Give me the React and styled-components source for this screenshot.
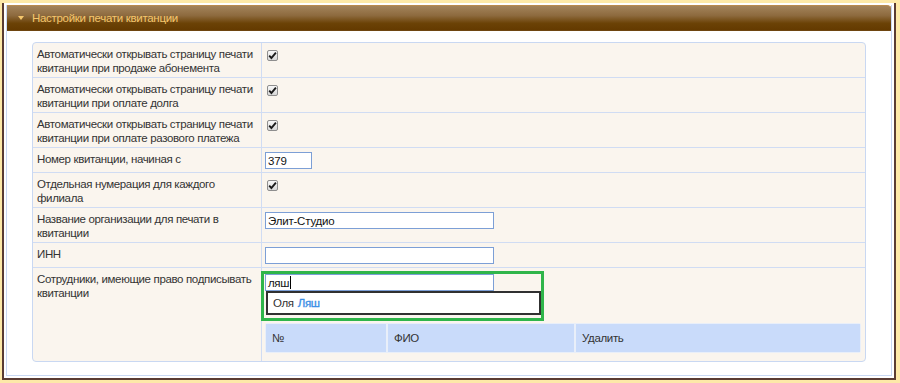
import * as React from "react";
import styled, { createGlobalStyle } from "styled-components";

const GlobalStyle = createGlobalStyle`
    body {
        margin: 0;
        background: #fde9a8;
        font-family: "Liberation Sans", Arial, sans-serif;
    }
`;

const rows = [
    { label: "Автоматически открывать страницу печати квитанции при продаже абонемента", kind: "check" },
    { label: "Автоматически открывать страницу печати квитанции при оплате долга", kind: "check" },
    { label: "Автоматически открывать страницу печати квитанции при оплате разового платежа", kind: "check" },
    { label: "Номер квитанции, начиная с", kind: "input", value: "379", short: true },
    { label: "Отдельная нумерация для каждого филиала", kind: "check" },
    { label: "Название организации для печати в квитанции", kind: "input", value: "Элит-Студио" },
    { label: "ИНН", kind: "input", value: "" },
];

function CheckMark() {
    return (
        <CheckBox>
            <svg width="9" height="9" viewBox="0 0 9 9">
                <path d="M1.2 4.6 L3.4 7 L7.9 1.6" fill="none" stroke="#1a1a1a" strokeWidth="1.9" />
            </svg>
        </CheckBox>
    );
}

function ReceiptSettings() {
    return (
        <Frame>
            <Panel>
                <Header>
                    <Arrow />
                    Настройки печати квитанции
                </Header>
                <Body>
                    <Table>
                        {rows.map((r, i) => (
                            <Row key={i}>
                                <LabelCell>{r.label}</LabelCell>
                                <ValueCell $tall={r.kind === "input"}>
                                    {r.kind === "check" ? (
                                        <CheckMark />
                                    ) : (
                                        <TextInput readOnly value={r.value} $short={r.short} />
                                    )}
                                </ValueCell>
                            </Row>
                        ))}
                        <Row $last>
                            <LabelCell>Сотрудники, имеющие право подписывать квитанции</LabelCell>
                            <ValueCell $compact>
                                <Highlight>
                                    <FakeInput>
                                        ляш
                                        <Caret />
                                    </FakeInput>
                                    <Suggest>
                                        Оля <Match>Ляш</Match>
                                    </Suggest>
                                </Highlight>
                                <SubTable>
                                    <HeadCell $w={120}>№</HeadCell>
                                    <HeadCell $w={186}>ФИО</HeadCell>
                                    <HeadCell $grow>Удалить</HeadCell>
                                </SubTable>
                            </ValueCell>
                        </Row>
                    </Table>
                </Body>
            </Panel>
        </Frame>
    );
}

const Frame = styled.div`
    box-sizing: border-box;
    width: 894px;
    height: 377px;
    margin: 3px 0 0 2px;
    border: 2px solid #5a3c33;
    border-top: none;
    padding: 2px 2px 2px 2px;
    background: #fff;
    display: flex;
`;
const Panel = styled.section`
    flex: 1;
    display: flex;
    flex-direction: column;
    border: 1px solid #c9d8f2;
    border-top: none;
    background: #fff;
    overflow: hidden;
`;
const Header = styled.div`
    flex: none;
    height: 26px;
    box-sizing: border-box;
    display: flex;
    align-items: center;
    padding-left: 11px;
    margin: 0 -1px;
    border: 1px solid #b98a4e;
    border-bottom-color: #6e4510;
    border-radius: 0 5px 0 0;
    background: linear-gradient(#a3835b 0%, #8d6a3e 40%, #6b4206 72%, #643a00 100%);
    color: #f5c66c;
    font-size: 11.5px;
    letter-spacing: -0.3px;
`;
const Arrow = styled.span`
    width: 0;
    height: 0;
    border-left: 3px solid transparent;
    border-right: 3px solid transparent;
    border-top: 4px solid #f5c66c;
    margin-right: 8px;
`;
const Body = styled.div`
    flex: 1;
    padding: 11px 25px 0 25px;
`;
const Table = styled.div`
    border: 1px solid #c9d8f2;
    border-radius: 4px;
    background: #faf5ee;
    color: #333;
    font-size: 11.5px;
    line-height: 14px;
    letter-spacing: -0.35px;
`;
const Row = styled.div`
    display: flex;
    border-top: 1px solid #d0dcf3;
    min-height: ${(p) => (p.$last ? "93px" : "auto")};
    &:first-child {
        border-top: none;
    }
`;
const LabelCell = styled.div`
    width: 224px;
    flex: none;
    padding: 4px 0 2px 4px;
    border-right: 1px solid #d0dcf3;
`;
const ValueCell = styled.div`
    flex: 1;
    padding: ${(p) => (p.$compact ? "3px 3px 0 3px" : p.$tall ? "4px 3px 3px 3px" : "7px 3px 3px 5px")};
`;
const CheckBox = styled.span`
    display: flex;
    align-items: center;
    justify-content: center;
    width: 11px;
    height: 11px;
    box-sizing: border-box;
    border: 1px solid #8e8e8e;
    border-radius: 2px;
    background: linear-gradient(#f8f8f8, #d8d8d8);
`;
const TextInput = styled.input`
    display: block;
    box-sizing: border-box;
    width: ${(p) => (p.$short ? "47px" : "229px")};
    height: 17px;
    margin: 0;
    padding: 0 2px;
    border: 1px solid #7c9fd6;
    background: #fff;
    color: #111;
    font-family: "Liberation Sans", Arial, sans-serif;
    font-size: 11.5px;
    letter-spacing: -0.2px;
    outline: none;
`;
const Highlight = styled.div`
    box-sizing: border-box;
    width: 283px;
    margin-left: -4px;
    border: 3px solid #2fb54a;
    padding: 0 0 3px 1px;
`;
const FakeInput = styled.div`
    box-sizing: border-box;
    width: 229px;
    height: 17px;
    display: flex;
    align-items: center;
    padding: 0 2px;
    border: 1px solid #7c9fd6;
    background: #fff;
    color: #111;
    font-size: 11.5px;
`;
const Caret = styled.span`
    width: 1px;
    height: 13px;
    margin-left: 1px;
    background: #000;
`;
const Suggest = styled.div`
    box-sizing: border-box;
    width: 275px;
    height: 24px;
    margin-left: 1px;
    display: flex;
    align-items: center;
    gap: 4px;
    padding-left: 5px;
    border: 2px solid #303030;
    background: #fff;
    color: #333;
    font-size: 11.5px;
`;
const Match = styled.b`
    color: #3b8fe6;
    font-weight: normal;
    -webkit-text-stroke: 0.35px #3b8fe6;
`;
const SubTable = styled.div`
    display: flex;
    gap: 2px;
    margin-top: 2px;
    margin-right: 1px;
    padding: 1px;
    background: #e9eff9;
    border-radius: 2px;
`;
const HeadCell = styled.div`
    box-sizing: border-box;
    width: ${(p) => (p.$w ? `${p.$w}px` : "auto")};
    flex: ${(p) => (p.$grow ? 1 : "none")};
    height: 28px;
    display: flex;
    align-items: center;
    padding-left: 6px;
    background: #c9dbfa;
    color: #333;
`;

export default function App() {
    return (
        <>
            <GlobalStyle />
            <ReceiptSettings />
        </>
    );
}
